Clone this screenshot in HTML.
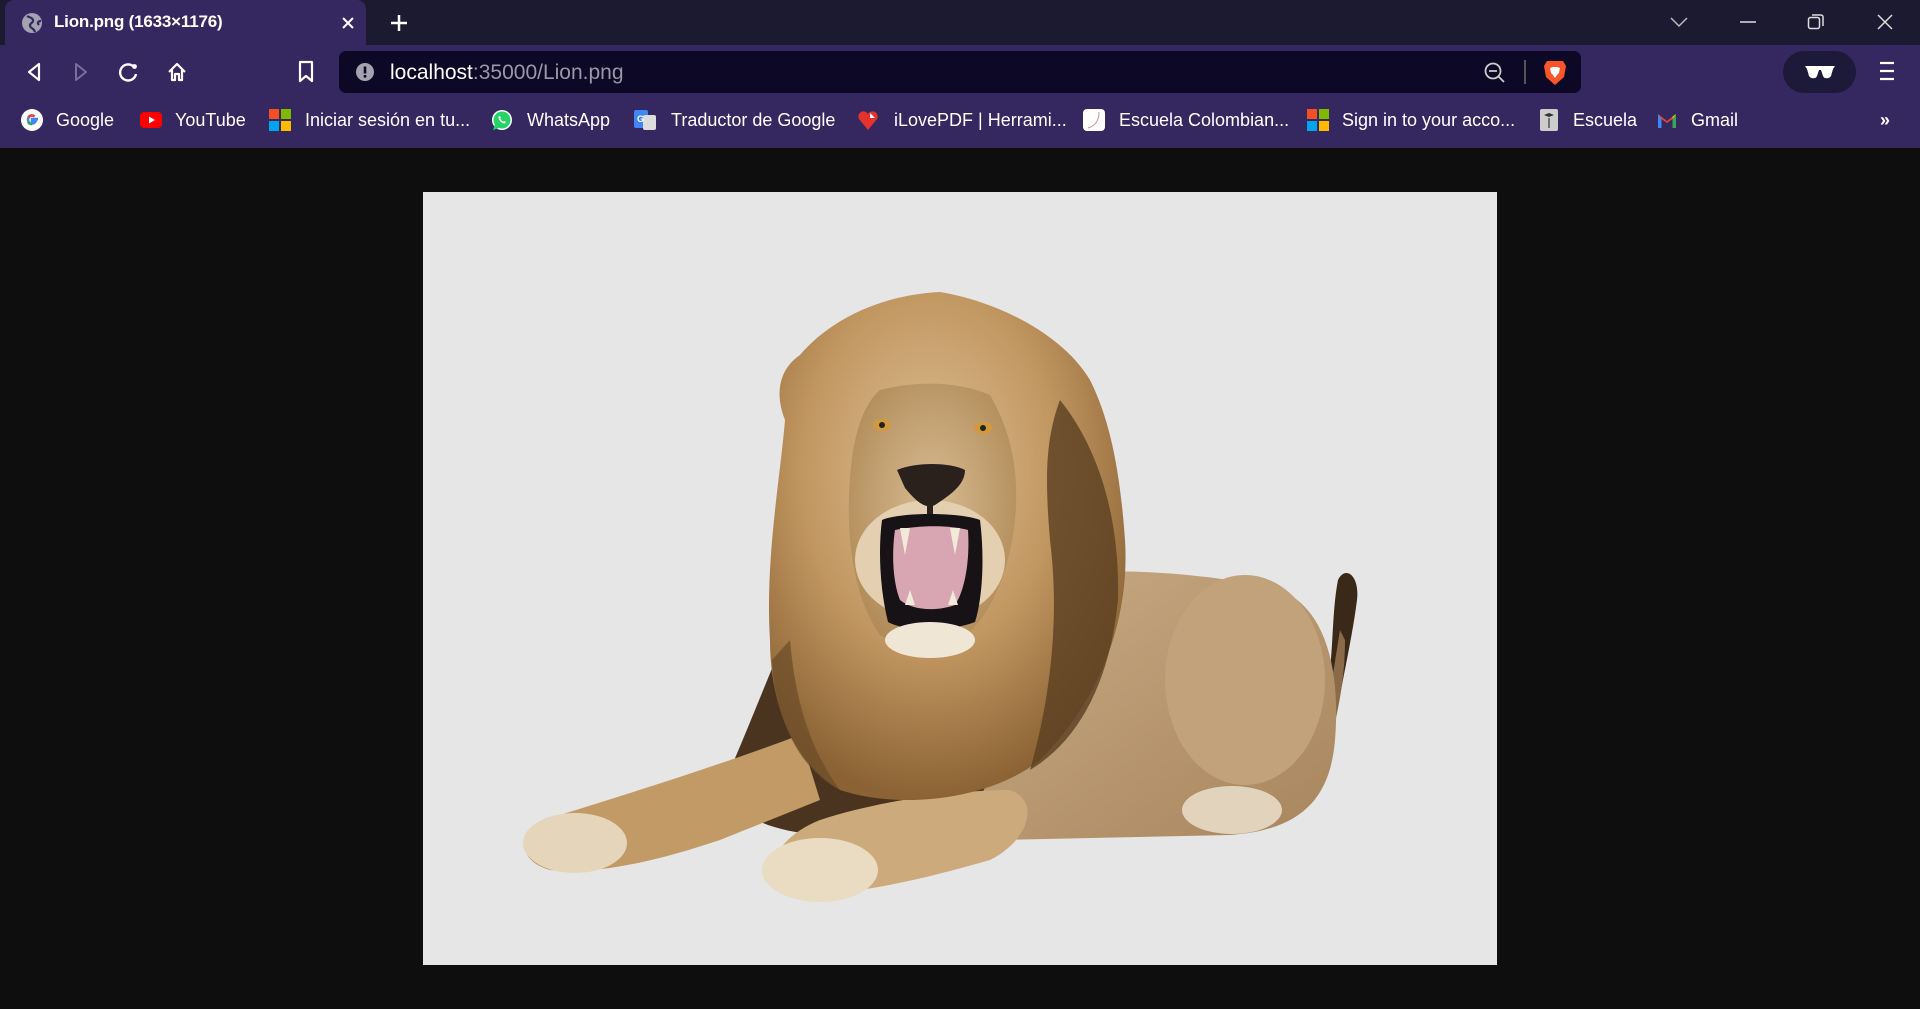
<!DOCTYPE html>
<html><head><meta charset="utf-8"><style>
*{margin:0;padding:0;box-sizing:border-box}
html,body{width:1920px;height:1009px;overflow:hidden;background:#0e0e0e;font-family:"Liberation Sans",sans-serif}
#tabs{position:absolute;left:0;top:0;width:1920px;height:45px;background:#1b1a30}
#tab{position:absolute;left:5px;top:0;width:361px;height:45px;background:#352760;border-radius:9px 9px 0 0}
#tab .t{position:absolute;left:49px;top:12px;color:#fff;font-size:17px;font-weight:bold;letter-spacing:-0.2px}
#tool{position:absolute;left:0;top:45px;width:1920px;height:103px;background:#352760}
#addr{position:absolute;left:339px;top:51px;width:1242px;height:42px;background:#0c0826;border-radius:7px}
#addr .u{position:absolute;left:51px;top:10px;font-size:21px;color:#fff}
#addr .u span{color:#9a98a8}
.bm{position:absolute;top:110px;color:#fff;font-size:18px;white-space:nowrap}
.ic{position:absolute;top:109px;width:22px;height:22px}
#img{position:absolute;left:423px;top:192px;width:1074px;height:773px;background:#e6e6e6;overflow:hidden}
</style></head><body>
<div id="tabs">
 <div id="tab">
  <svg style="position:absolute;left:16px;top:12px" width="22" height="22" viewBox="0 0 22 22"><circle cx="11" cy="11" r="10" fill="#a4a2b0"/><path d="M6 4c3 2 5 1 6 4s-4 3-3 6 4 2 5 6M20 9c-3 0-4 2-2 4" stroke="#352760" stroke-width="2.2" fill="none"/></svg>
  <div class="t">Lion.png (1633×1176)</div>
  <svg style="position:absolute;left:336px;top:16px" width="14" height="14"><path d="M2 2L12 12M12 2L2 12" stroke="#fff" stroke-width="2"/></svg>
 </div>
 <svg style="position:absolute;left:389px;top:13px" width="20" height="20"><path d="M10 2V18M2 10H18" stroke="#fff" stroke-width="2.5"/></svg>
 <svg style="position:absolute;left:1670px;top:16px" width="18" height="12"><path d="M1 2L9 10L17 2" stroke="#bbb" stroke-width="1.5" fill="none"/></svg>
 <svg style="position:absolute;left:1740px;top:20px" width="16" height="4"><path d="M0 2H16" stroke="#ddd" stroke-width="1.5"/></svg>
 <svg style="position:absolute;left:1807px;top:13px" width="18" height="18"><rect x="1.5" y="4.5" width="11" height="11" rx="2" stroke="#ddd" stroke-width="1.5" fill="none"/><path d="M5 2H14A2 2 0 0 1 16 4V13" stroke="#ddd" stroke-width="1.5" fill="none"/></svg>
 <svg style="position:absolute;left:1876px;top:13px" width="18" height="18"><path d="M2 2L16 16M16 2L2 16" stroke="#ddd" stroke-width="1.5"/></svg>
</div>
<div id="tool">
 <svg style="position:absolute;left:24px;top:16px" width="20" height="22"><path d="M15 3L5 11L15 19Z" stroke="#fff" stroke-width="2.2" fill="none" stroke-linejoin="round"/></svg>
 <svg style="position:absolute;left:71px;top:16px" width="20" height="22"><path d="M5 3L15 11L5 19Z" stroke="#77709a" stroke-width="2" fill="none" stroke-linejoin="round"/></svg>
 <svg style="position:absolute;left:117px;top:16px" width="22" height="22"><path d="M17 6A8 8 0 1 0 19 13" stroke="#fff" stroke-width="2.4" fill="none"/><circle cx="17.5" cy="5.5" r="2.4" fill="#fff"/></svg>
 <svg style="position:absolute;left:166px;top:16px" width="22" height="22"><path d="M3 11L11 3L19 11M6 8V19H9V13H13V19H16V8" stroke="#fff" stroke-width="2.2" fill="none" stroke-linejoin="round"/></svg>
 <svg style="position:absolute;left:297px;top:15px" width="18" height="24"><path d="M3 2H15V21L9 16L3 21Z" stroke="#fff" stroke-width="2.2" fill="none" stroke-linejoin="round"/></svg>
</div>
<div id="addr">
 <svg style="position:absolute;left:16px;top:11px" width="20" height="20"><circle cx="10" cy="10" r="9" fill="#a4a2b0"/><rect x="8.7" y="4.5" width="2.6" height="7" fill="#0c0826"/><rect x="8.7" y="13" width="2.6" height="2.6" fill="#0c0826"/></svg>
 <div class="u">localhost<span>:35000/Lion.png</span></div>
 <svg style="position:absolute;left:1144px;top:10px" width="24" height="24"><circle cx="10" cy="10" r="7.5" stroke="#ccc" stroke-width="1.8" fill="none"/><path d="M6 10H14M15.5 15.5L21 21" stroke="#ccc" stroke-width="1.8"/></svg>
 <div style="position:absolute;left:1185px;top:9px;width:2px;height:24px;background:#555"></div>
 <svg style="position:absolute;left:1203px;top:8px" width="26" height="28" viewBox="0 0 26 28"><path d="M5 2H21L24 7L22 18L13 26L4 18L2 7Z" fill="#fb542b"/><path d="M8 9L11 8H15L18 9L17 14L15 16L13 19L11 16L9 14Z" fill="#fff"/></svg>
</div>
<div style="position:absolute;left:1783px;top:51px;width:73px;height:42px;border-radius:21px;background:#1d1938"></div>
<svg style="position:absolute;left:1804px;top:64px" width="32" height="16"><path d="M1 2H31L29 5L27 12C25 15 20 15 19 12L17 6H15L13 12C12 15 7 15 5 12L3 5Z" fill="#fff"/></svg>
<svg style="position:absolute;left:1878px;top:60px" width="18" height="22"><path d="M2 3H16M2 11H16M2 19H16" stroke="#fff" stroke-width="2.2"/></svg>

<svg class="ic" style="left:21px" viewBox="0 0 22 22"><circle cx="11" cy="11" r="11" fill="#fff"/><path d="M17 10H11V12.5H14.5A4 4 0 1 1 13.5 7.5" stroke="#4285f4" stroke-width="2.4" fill="none"/><path d="M7.2 8.5A4 4 0 0 1 13.5 7.5" stroke="#ea4335" stroke-width="2.4" fill="none"/><path d="M7 13A4 4 0 0 0 11 15" stroke="#34a853" stroke-width="2.4" fill="none"/></svg>
<div class="bm" style="left:56px">Google</div>
<svg class="ic" style="left:140px" viewBox="0 0 22 22"><rect x="0" y="3" width="22" height="16" rx="4" fill="#f00"/><path d="M9 7.5V14.5L15 11Z" fill="#fff"/></svg>
<div class="bm" style="left:175px">YouTube</div>
<svg class="ic" style="left:269px" viewBox="0 0 22 22"><rect width="10" height="10" fill="#f25022"/><rect x="12" width="10" height="10" fill="#7fba00"/><rect y="12" width="10" height="10" fill="#00a4ef"/><rect x="12" y="12" width="10" height="10" fill="#ffb900"/></svg>
<div class="bm" style="left:305px">Iniciar sesión en tu...</div>
<svg class="ic" style="left:491px" viewBox="0 0 22 22"><circle cx="11" cy="11" r="10" fill="#fff"/><circle cx="11" cy="11" r="8.5" fill="#25d366"/><path d="M2 21L4 15L8 19Z" fill="#25d366"/><path d="M7.5 7.5C7 10 10 14.5 14 14.5L15 13L13.5 12L12.5 12.8C11 12 10 11 9.3 9.5L10 8.5L9 7Z" fill="#fff"/></svg>
<div class="bm" style="left:527px">WhatsApp</div>
<svg class="ic" style="left:634px" viewBox="0 0 22 22"><rect x="0" y="1" width="14" height="18" rx="2" fill="#4285f4"/><rect x="9" y="6" width="13" height="15" rx="2" fill="#ddd"/><text x="3" y="13" font-size="9" fill="#fff" font-family="Liberation Sans" font-weight="bold">G</text></svg>
<div class="bm" style="left:671px">Traductor de Google</div>
<svg class="ic" style="left:857px" viewBox="0 0 22 22"><path d="M11 21L2 10A5 5 0 0 1 11 5A5 5 0 0 1 20 10Z" fill="#e5322d"/><path d="M13 4L18 9H13Z" fill="#fff"/></svg>
<div class="bm" style="left:894px">iLovePDF | Herrami...</div>
<svg class="ic" style="left:1083px" viewBox="0 0 22 22"><rect width="22" height="22" rx="4" fill="#fff"/><path d="M16 3C16 12 12 17 5 19" stroke="#c99" stroke-width="1" fill="none"/></svg>
<div class="bm" style="left:1119px">Escuela Colombian...</div>
<svg class="ic" style="left:1307px" viewBox="0 0 22 22"><rect width="10" height="10" fill="#f25022"/><rect x="12" width="10" height="10" fill="#7fba00"/><rect y="12" width="10" height="10" fill="#00a4ef"/><rect x="12" y="12" width="10" height="10" fill="#ffb900"/></svg>
<div class="bm" style="left:1342px">Sign in to your acco...</div>
<svg class="ic" style="left:1538px" viewBox="0 0 22 22"><rect x="2" width="18" height="22" rx="2" fill="#ccc"/><path d="M6 6L11 4L16 6L11 8Z" fill="#333"/><path d="M11 9V19" stroke="#555" stroke-width="1.5"/></svg>
<div class="bm" style="left:1573px">Escuela</div>
<svg class="ic" style="left:1656px" viewBox="0 0 22 22"><path d="M2 5V19H5.5V10L11 14L16.5 10V19H20V5L11 12Z" fill="#ea4335"/><path d="M2 5V19H5.5V10Z" fill="#4285f4"/><path d="M16.5 10V19H20V5Z" fill="#34a853"/><path d="M20 5L16.5 10V7.5Z" fill="#fbbc04"/></svg>
<div class="bm" style="left:1691px">Gmail</div>
<div class="bm" style="left:1880px;font-weight:bold">»</div>

<div id="img">
<svg width="1074" height="773" viewBox="423 192 1074 773">
<defs>
<radialGradient id="mane" cx="0.45" cy="0.35" r="0.65"><stop offset="0" stop-color="#dcc094"/><stop offset="0.55" stop-color="#c19660"/><stop offset="1" stop-color="#8a6234"/></radialGradient>
<linearGradient id="body" x1="0" y1="0" x2="1" y2="1"><stop offset="0" stop-color="#c9ab85"/><stop offset="1" stop-color="#a8855d"/></linearGradient>
<radialGradient id="face" cx="0.5" cy="0.45" r="0.6"><stop offset="0" stop-color="#d8bc92"/><stop offset="1" stop-color="#b08a58"/></radialGradient>
</defs>
<path d="M1320 720C1335 680 1330 620 1338 580C1345 565 1360 575 1357 600C1352 640 1340 690 1335 725Z" fill="#3a2818"/>
<path d="M1320 730C1330 700 1335 660 1340 630L1345 640C1345 680 1338 710 1332 735Z" fill="#8a6a48"/>
<path d="M1000 580C1080 565 1200 570 1280 590C1330 610 1340 680 1335 740C1330 800 1300 830 1230 835L1000 840C960 760 960 650 1000 580Z" fill="url(#body)"/>
<ellipse cx="1245" cy="680" rx="80" ry="105" fill="#c2a27a"/>
<ellipse cx="1232" cy="810" rx="50" ry="24" fill="#e2d4bc"/>
<path d="M820 560C790 620 760 700 730 770C720 810 760 830 820 835L960 830C1000 780 1020 680 1030 600C1000 560 900 540 820 560Z" fill="#4a3420"/>
<path d="M800 735C720 765 640 790 560 815C515 830 515 860 550 870C600 875 660 860 720 840L820 800Z" fill="#c29a66"/>
<ellipse cx="575" cy="843" rx="52" ry="30" fill="#e5d6bb"/>
<path d="M1010 790C960 790 880 800 820 820C770 840 760 880 790 890C840 900 920 880 990 860C1030 840 1040 800 1010 790Z" fill="#cdaa7c"/>
<ellipse cx="820" cy="870" rx="58" ry="32" fill="#e9dcc3"/>
<path d="M940 292C990 300 1060 330 1090 380C1110 420 1120 470 1125 540C1130 620 1100 700 1040 760C990 800 900 810 840 790C790 760 770 700 770 640C765 560 780 480 785 420C775 395 778 370 800 355C830 320 880 295 940 292Z" fill="url(#mane)"/>
<path d="M1060 400C1100 450 1120 520 1118 600C1110 680 1080 740 1030 770C1050 700 1060 620 1050 540C1045 480 1045 440 1060 400Z" fill="#5a3e22" opacity="0.8"/>
<path d="M790 640C795 700 810 750 840 790C800 770 775 720 772 660Z" fill="#6a4a28" opacity="0.7"/>
<path d="M880 390C920 380 960 382 990 395C1010 430 1020 470 1015 520C1010 570 990 620 960 640C930 650 900 648 880 635C855 600 845 540 850 480C852 440 862 405 880 390Z" fill="url(#face)"/>
<ellipse cx="930" cy="560" rx="75" ry="60" fill="#e4d0b0"/>
<ellipse cx="882" cy="425" rx="9" ry="6" fill="#d29a3d"/><circle cx="882" cy="425" r="3" fill="#222"/>
<ellipse cx="983" cy="428" rx="9" ry="6" fill="#d29a3d"/><circle cx="983" cy="428" r="3" fill="#222"/>
<path d="M897 470C915 462 950 462 965 470C965 485 950 495 935 505C925 510 915 500 905 488Z" fill="#2a201c"/>
<path d="M930 500V520" stroke="#2a201c" stroke-width="6"/>
<path d="M882 520C900 512 960 512 980 520C985 560 982 600 975 622C950 632 905 632 888 622C880 590 878 550 882 520Z" fill="#161216"/>
<path d="M895 530C920 525 950 525 968 530C970 560 965 590 955 605C935 612 912 610 900 600C892 580 892 550 895 530Z" fill="#d8a6b2"/>
<path d="M900 528L905 555L910 528ZM960 528L955 555L950 528Z" fill="#f2ead8"/>
<path d="M905 605L910 590L915 605ZM948 605L953 590L958 605Z" fill="#f2ead8"/>
<ellipse cx="930" cy="640" rx="45" ry="18" fill="#f0e6d6"/>
</svg>
</div>
</body></html>
